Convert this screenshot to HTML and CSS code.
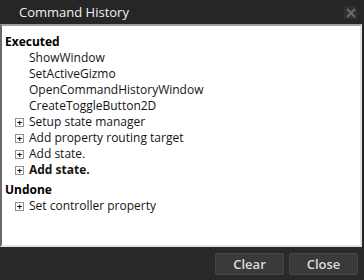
FILE: index.html
```html
<!DOCTYPE html>
<html lang="en">
  <head>
    <meta charset="UTF-8" />
    <title>Command History</title>
    <link rel="stylesheet" href="styles.css">
  </head>
  <body>
    <div class="window">
      <div class="titlebar">
        <p class="title">Command History</p>
        <button class="close-button">
          <svg width="10" height="10" viewBox="0 0 10 10">
            <path d="M1 1 L9 9 M9 1 L1 9" stroke="#6b6b6b" stroke-width="2" />
          </svg>
        </button>
      </div>
      <div class="panel">
        <div class="group">
          <p class="group-title">Executed</p>
          <p class="item leaf">ShowWindow</p>
          <p class="item leaf">SetActiveGizmo</p>
          <p class="item leaf">OpenCommandHistoryWindow</p>
          <p class="item leaf">CreateToggleButton2D</p>
          <p class="item"><span class="expander">+</span>Setup state manager</p>
          <p class="item"><span class="expander">+</span>Add property routing target</p>
          <p class="item"><span class="expander">+</span>Add state.</p>
          <p class="item current"><span class="expander">+</span>Add state.</p>
        </div>
        <div class="group">
          <p class="group-title">Undone</p>
          <p class="item"><span class="expander">+</span>Set controller property</p>
        </div>
      </div>
      <div class="footer">
        <button class="footer-button">Clear</button>
        <button class="footer-button">Close</button>
      </div>
    </div>
  </body>
</html>
```

FILE: styles.css
```css
body {
  margin: 0;
  background-color: rgb(38, 38, 38);
  font-family: "Open Sans", "Noto Sans", sans-serif;
}

p {
  margin: 0;
}

.window {
  width: 364px;
  height: 280px;
  display: flex;
  flex-direction: column;
}

.titlebar {
  height: 24px;
  display: flex;
  align-items: center;
  justify-content: space-between;
  padding: 0 7px 0 19px;
}

.title {
  color: rgb(240, 240, 240);
  font-size: 13px;
}

.close-button {
  width: 13px;
  height: 13px;
  padding: 0;
  border: none;
  background-color: rgb(48, 48, 48);
  display: flex;
  align-items: center;
  justify-content: center;
  margin-top: 1px;
}

.panel {
  flex: 1;
  margin-right: 2px;
  background-color: white;
  border-style: solid;
  border-width: 2px;
  border-color: rgb(160, 160, 160) rgb(227, 227, 227) rgb(227, 227, 227) rgb(105, 105, 105);
  padding: 8px 3px 0 3px;
}

.group {
  margin-bottom: 4px;
}

.group-title {
  font-size: 12px;
  font-weight: bold;
  line-height: 16px;
  color: black;
}

.item {
  font-size: 12px;
  line-height: 16px;
  color: rgb(20, 20, 20);
  display: flex;
  align-items: center;
  padding-left: 10px;
}

.leaf {
  padding-left: 24px;
}

.current {
  font-weight: bold;
}

.expander {
  width: 7px;
  height: 7px;
  border: 1px solid rgb(145, 145, 145);
  font-size: 9px;
  line-height: 7px;
  font-weight: bold;
  text-align: center;
  margin-right: 5px;
  color: black;
}

.footer {
  height: 33px;
  display: flex;
  align-items: center;
  justify-content: flex-end;
  gap: 5px;
  padding-right: 6px;
  background-color: rgb(41, 41, 41);
}

.footer-button {
  width: 69px;
  height: 22px;
  background-color: rgb(58, 58, 58);
  border: 1px solid rgb(70, 70, 70);
  border-radius: 2px;
  color: rgb(220, 220, 220);
  font-family: "Open Sans", sans-serif;
  font-size: 13px;
  font-weight: 600;
  padding: 0;
}
```
